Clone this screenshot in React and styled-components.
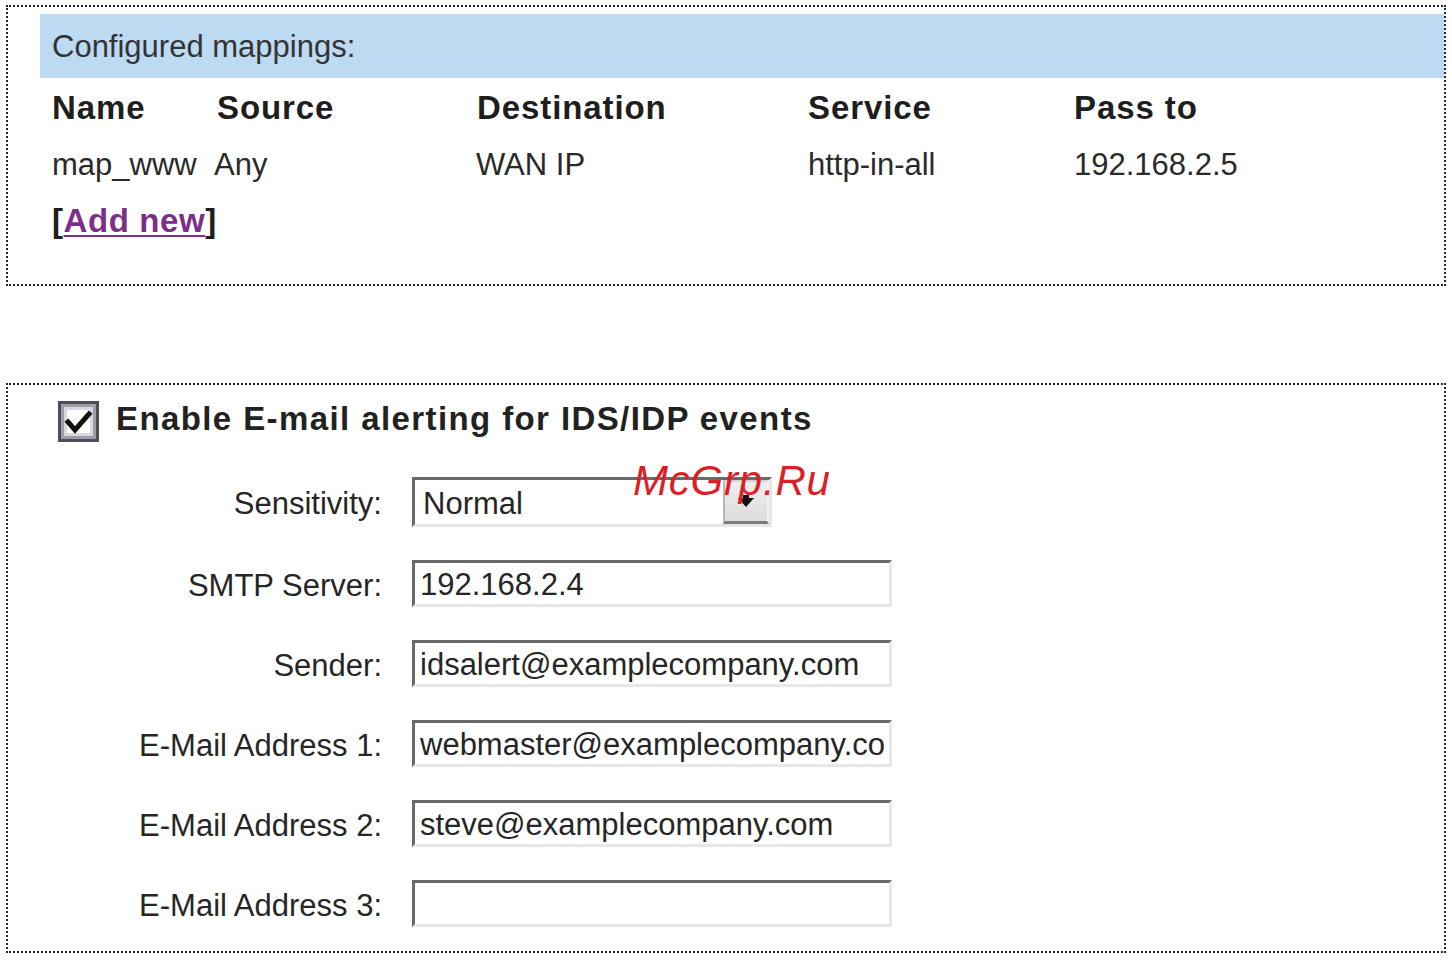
import React from 'react';
import styled, { createGlobalStyle } from 'styled-components';

const Global = createGlobalStyle`
  html, body { margin: 0; padding: 0; background: #ffffff; }
  body {
    font-family: "Liberation Sans", Arial, sans-serif;
    color: #262626;
    -webkit-font-smoothing: antialiased;
  }
  * { box-sizing: border-box; }
`;

const Page = styled.div`
  width: 1452px;
  padding: 5px 6px 0 6px;
`;

const Panel = styled.section`
  position: relative;
  width: 1440px;
  border: 2px dotted #262626;
  margin-top: ${p => p.$gap || 0}px;
  padding: ${p => p.$pad};
`;

const HeaderBar = styled.div`
  height: 64px;
  line-height: 66px;
  background: #bcdaf1;
  padding-left: 12px;
  font-size: 31px;
  color: #333;
`;

const MappingGrid = styled.div`
  display: grid;
  grid-template-columns: 165px 260px 331px 266px 1fr;
  grid-auto-rows: 57px;
  margin-left: 12px;
  align-items: center;
`;

const HeadCell = styled.div`
  font-weight: 700;
  font-size: 33px;
  letter-spacing: 0.9px;
  color: #1e1e1e;
  white-space: nowrap;
  padding-top: 3px;
`;

const Cell = styled.div`
  font-size: 31px;
  color: #2a2a2a;
  white-space: nowrap;
  padding-top: 2px;
  margin-left: ${p => p.$shift || 0}px;
`;

const AddRow = styled.div`
  grid-column: 1 / -1;
  font-weight: 700;
  font-size: 33px;
  letter-spacing: 0.6px;
  color: #1e1e1e;
`;

const Link = styled.a`
  color: #7b2f88;
  text-decoration: underline;
  text-decoration-thickness: 2px;
  text-underline-offset: 3px;
  cursor: pointer;
`;

const TitleRow = styled.label`
  display: flex;
  align-items: center;
  gap: 17px;
  height: 41px;
  margin-left: 50px;
`;

const CheckBox = styled.span`
  display: inline-flex;
  align-items: center;
  justify-content: center;
  width: 41px;
  height: 41px;
  background: #fff;
  border: 3px solid #4e4e5a;
  box-shadow: inset 0 0 0 3px #9e9ea8, inset 0 0 0 6px #d8d8de;
  flex: none;
`;

const Title = styled.span`
  font-weight: 700;
  font-size: 33px;
  letter-spacing: 1.4px;
  color: #222;
  white-space: nowrap;
  margin-bottom: 5px;
`;

const Form = styled.div`
  display: grid;
  grid-template-columns: 374px 480px;
  column-gap: 30px;
  row-gap: 33px;
  margin-top: 35px;
  align-items: center;
`;

const Label = styled.div`
  font-size: 31px;
  color: #262626;
  text-align: right;
  white-space: nowrap;
  padding-top: 4px;
`;

const TextInput = styled.input`
  display: block;
  width: 480px;
  height: 47px;
  margin: 0;
  padding: 3px 4px 0 5px;
  font-family: "Liberation Sans", Arial, sans-serif;
  font-size: 31px;
  color: #262626;
  background: #fff;
  border-style: solid;
  border-width: 3px;
  border-color: #6a6a6a #e8e8e8 #e8e8e8 #6a6a6a;
  outline: none;
`;

const Select = styled.div`
  display: flex;
  align-items: center;
  width: 360px;
  height: 50px;
  background: #fff;
  border-style: solid;
  border-width: 3px;
  border-color: #6a6a6a #e6e6e6 #e6e6e6 #6a6a6a;
  font-size: 31px;
  color: #262626;
  padding: 0 0 0 8px;
`;

const SelectValue = styled.span`
  flex: 1;
  padding-top: 4px;
`;

const DropButton = styled.span`
  display: flex;
  align-items: center;
  justify-content: center;
  width: 46px;
  height: 100%;
  background: linear-gradient(#efefef, #dcdcdc);
  border-style: solid;
  border-width: 2px 2px 3px 2px;
  border-color: #d4d4d4 #f2f2f2 #7a7a7a #b8b8b8;
`;

const Watermark = styled.div`
  position: absolute;
  left: 625px;
  top: 75px;
  font-family: "Liberation Sans", Arial, sans-serif;
  font-style: italic;
  font-size: 42px;
  line-height: 1;
  letter-spacing: 0.8px;
  color: #dc1f26;
  pointer-events: none;
`;

const columns = ['Name', 'Source', 'Destination', 'Service', 'Pass to'];
const row = [
  { v: 'map_www' },
  { v: 'Any', shift: -3 },
  { v: 'WAN IP', shift: -1 },
  { v: 'http-in-all' },
  { v: '192.168.2.5' },
];

const fields = [
  { label: 'SMTP Server:', value: '192.168.2.4' },
  { label: 'Sender:', value: 'idsalert@examplecompany.com' },
  { label: 'E-Mail Address 1:', value: 'webmaster@examplecompany.com' },
  { label: 'E-Mail Address 2:', value: 'steve@examplecompany.com' },
  { label: 'E-Mail Address 3:', value: '' },
];

export default function App() {
  return (
    <Page>
      <Global />
      <Panel $pad="7px 0 35px 32px">
        <HeaderBar>Configured mappings:</HeaderBar>
        <MappingGrid>
          {columns.map(c => (
            <HeadCell key={c}>{c}</HeadCell>
          ))}
          {row.map(c => (
            <Cell key={c.v} $shift={c.shift}>{c.v}</Cell>
          ))}
          <AddRow>
            [<Link>Add new</Link>]
          </AddRow>
        </MappingGrid>
      </Panel>

      <Panel $gap={97} $pad="16px 0 24px 0">
        <TitleRow>
          <CheckBox>
            <svg width="30" height="30" viewBox="0 0 30 30">
              <path d="M4 15 L11 23 L25 7" fill="none" stroke="#111" strokeWidth="5" strokeLinecap="square" strokeLinejoin="miter" />
            </svg>
          </CheckBox>
          <Title>Enable E-mail alerting for IDS/IDP events</Title>
        </TitleRow>
        <Form>
          <Label>Sensitivity:</Label>
          <Select>
            <SelectValue>Normal</SelectValue>
            <DropButton>
              <svg width="18" height="14" viewBox="0 0 18 14">
                <path d="M1 3 H17 L9 12 Z" fill="#111" />
                <rect x="6" y="0" width="6" height="4" fill="#111" />
              </svg>
            </DropButton>
          </Select>
          {fields.map(f => (
            <React.Fragment key={f.label}>
              <Label>{f.label}</Label>
              <TextInput readOnly value={f.value} />
            </React.Fragment>
          ))}
        </Form>
        <Watermark>McGrp.Ru</Watermark>
      </Panel>
    </Page>
  );
}
